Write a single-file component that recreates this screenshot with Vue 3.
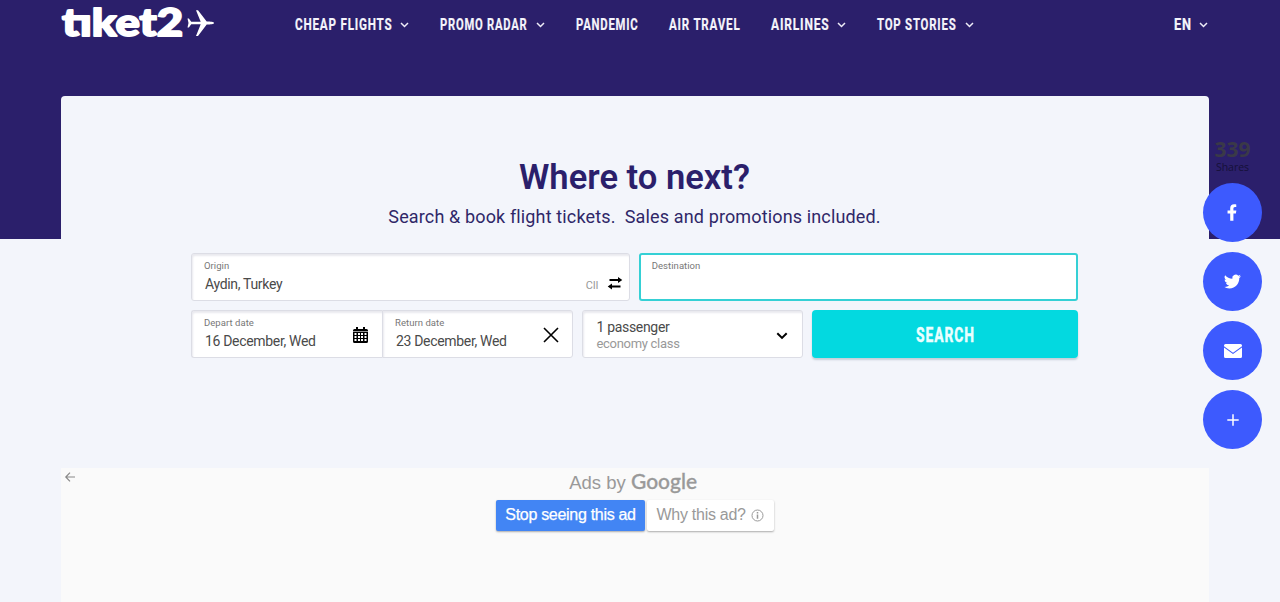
<script setup>
const links = [
  { label: 'CHEAP FLIGHTS', width: 97, menu: true },
  { label: 'PROMO RADAR', width: 87, menu: true },
  { label: 'PANDEMIC', width: 62 },
  { label: 'AIR TRAVEL', width: 71 },
  { label: 'AIRLINES', width: 58, menu: true },
  { label: 'TOP STORIES', width: 79, menu: true },
]
</script>

<template>
  <div class="page">
    <header>
      <a class="logo">
        <svg width="154" height="44" viewBox="0 0 154 44">
          <text class="logo-text" x="1" y="36" textLength="121" lengthAdjust="spacingAndGlyphs">tıket2</text>
          <path d="M126.500 18.500h1.400l2.300 3.200h9.500L135 10.200h2l8.700 11.300c4 0 7.300.4 7.300 1.500s-3.300 1.500-7.300 1.500L137 36h-2l4.700-11.700h-9.500l-2.300 3.200h-1.400l1-4.500z" fill="#fff" />
        </svg>
      </a>
      <nav>
        <a v-for="link in links" :key="link.label">
          <svg class="label" :width="link.width" height="20">
            <text x="0" y="15" :textLength="link.width + .5" lengthAdjust="spacingAndGlyphs">{{ link.label }}</text>
          </svg>
          <svg v-if="link.menu" class="chevron" width="9" height="6" viewBox="0 0 9 6"><path d="M1 1l3.500 3.500L8 1" /></svg>
        </a>
      </nav>
      <a class="lang">
        <svg class="label" width="17" height="20"><text x="0" y="15" textLength="18" lengthAdjust="spacingAndGlyphs">EN</text></svg>
        <svg class="chevron" width="9" height="6" viewBox="0 0 9 6"><path d="M1 1l3.500 3.500L8 1" /></svg>
      </a>
    </header>

    <main>
      <h1>Where to next?</h1>
      <p class="lead">Search &amp; book flight tickets.&nbsp; Sales and promotions included.</p>
      <form>
        <div class="row places">
          <div class="field">
            <small>Origin</small>
            <span>Aydin, Turkey</span>
            <i class="code">CII</i>
            <svg class="swap" width="16" height="14" viewBox="0 0 16 14" fill="none" stroke="#000" stroke-width="1.800">
              <path d="M2.500 4H12M4 10.500h9.500" />
              <path d="M11 1L15.300 4 11 7zM5 7.500L.7 10.500 5 13.500z" fill="#000" stroke="none" />
            </svg>
          </div>
          <div class="field active"><small>Destination</small></div>
        </div>
        <div class="row options">
          <div class="dates">
            <div class="field">
              <small>Depart date</small>
              <span>16 December, Wed</span>
              <svg class="calendar" width="15" height="16" viewBox="0 0 15 16">
                <path d="M3 0h2v2h5V0h2v2h1.500Q15 2 15 3.500v11q0 1.500-1.500 1.500h-12Q0 16 0 14.500v-11Q0 2 1.500 2H3z" />
                <path d="M1.500 6h2v2h-2zM5 6h2v2H5zM8 6h2v2H8zM11.500 6h2v2h-2zM1.500 9h2v2h-2zM5 9h2v2H5zM8 9h2v2H8zM11.500 9h2v2h-2zM1.500 12h2v2h-2zM5 12h2v2H5zM8 12h2v2H8zM11.500 12h2v2h-2z" fill="#fff" />
                <path d="M0 4.500h15" stroke="#999" />
              </svg>
            </div>
            <div class="field">
              <small>Return date</small>
              <span>23 December, Wed</span>
              <svg class="clear" width="16" height="16" viewBox="0 0 16 16"><path d="M1 1l14 14M15 1L1 15" stroke="#000" stroke-width="1.600" /></svg>
            </div>
          </div>
          <div class="field passengers">
            <span>1 passenger</span>
            <em>economy class</em>
            <svg class="arrow" width="12" height="8" viewBox="0 0 12 8"><path d="M1.300 1.200L6 5.900l4.700-4.700" fill="none" stroke="#000" stroke-width="2" /></svg>
          </div>
          <button type="button">
            <svg width="58" height="24"><text x="0" y="19.500" textLength="59" lengthAdjust="spacingAndGlyphs">SEARCH</text></svg>
          </button>
        </div>
      </form>
    </main>

    <section class="ad">
      <svg class="back" width="10" height="10" viewBox="0 0 10 10" fill="none" stroke="#888" stroke-width="1.200"><path d="M10 5H1M5 .7L.8 5 5 9.300" /></svg>
      <div class="ads-by">
        <span>Ads by</span>
        <svg width="67" height="28"><text x="0" y="19" textLength="66" lengthAdjust="spacingAndGlyphs">Google</text></svg>
      </div>
      <div class="ad-buttons">
        <a class="stop">Stop seeing this ad</a>
        <a class="why">
          Why this ad?
          <svg width="13" height="13" viewBox="0 0 13 13" fill="none" stroke="#999"><circle cx="6.500" cy="6.500" r="5.500" /><path d="M6.500 5.500v4.300M6.500 3v1.500" stroke-width="1.500" /></svg>
        </a>
      </div>
    </section>

    <aside>
      <strong>339</strong>
      <span>Shares</span>
      <a>
        <svg width="11" height="17" viewBox="0 0 12 18"><path d="M3.500 18V10H.6V6.700h2.900V4.300C3.500 1.500 5.100 0 7.700 0c1.200 0 2.400.2 2.400.2v2.900H8.700C7.400 3.100 7 3.900 7 4.700v2h3.200L9.700 10H7v8z" /></svg>
      </a>
      <a>
        <svg width="17" height="17" viewBox="0 0 24 24"><path d="M23.950 4.570a10 10 0 01-2.820.775 4.960 4.960 0 002.160-2.723 9.900 9.900 0 01-3.120 1.190 4.920 4.920 0 00-8.384 4.482A13.930 13.930 0 011.640 3.160a4.920 4.920 0 001.520 6.570 4.900 4.900 0 01-2.230-.616v.06a4.920 4.920 0 003.950 4.827 5 5 0 01-2.212.085 4.940 4.940 0 004.600 3.420A9.870 9.870 0 010 19.540a13.940 13.940 0 007.550 2.210c9.050 0 14-7.500 14-13.980 0-.21 0-.42-.015-.63a9.940 9.940 0 002.415-2.570z" /></svg>
      </a>
      <a>
        <svg width="18" height="14" viewBox="0 0 18 14"><path d="M1.500 0h15Q18 0 18 1.500v.8L9 8.800 0 2.300v-.8Q0 0 1.500 0zM0 3.400l9 6.500 9-6.500v9.100q0 1.500-1.500 1.500h-15Q0 14 0 12.500z" /></svg>
      </a>
      <a>
        <svg width="12" height="12" viewBox="0 0 12 12"><path d="M6 .3v11.400M.3 6h11.400" stroke="#fff" stroke-width="1.500" /></svg>
      </a>
    </aside>
  </div>
</template>

<style>
body { background: #f3f5fb; }
</style>

<style scoped>
.page {
  position: relative;
  height: 602px;
  overflow: hidden;
  box-sizing: border-box;
  padding: 0 71px 0 61px;
  font-family: Roboto, "Liberation Sans", sans-serif;
  background: linear-gradient(#2b1f6b 238.500px, #f3f5fb 238.500px);
}
svg { display: block; flex: none; overflow: visible; }

header { display: flex; height: 96px; align-items: flex-start; }
.logo { width: 233.500px; }
.logo-text {
  font: 900 37px Lato, sans-serif;
  fill: #fff; stroke: #fff; stroke-width: 1.800; stroke-linejoin: round;
}
nav { display: flex; gap: 31px; padding-top: 14.500px; }
nav a, .lang { display: flex; align-items: center; gap: 8.500px; }
.label text { font: 700 16px Roboto, sans-serif; letter-spacing: 1.100px; fill: #f5f4fb; stroke: #f5f4fb; stroke-width: .2; }
.chevron path { fill: none; stroke: #eeecf8; stroke-width: 1.500; }
.lang { margin-left: auto; margin-right: 1px; padding-top: 14.500px; }

main {
  height: 372px;
  box-sizing: border-box;
  padding: 60px 131px 0 130px;
  border-radius: 4px 4px 0 0;
  background: #f3f5fb;
  text-align: center;
}
h1 { margin: 0; font-size: 34.600px; line-height: 42px; font-weight: 600; color: #2b1f6b; }
.lead { margin: 7px 0 0; font-size: 18px; line-height: 23px; letter-spacing: .14px; font-weight: 450; color: #2f2768; }
form { display: flex; flex-direction: column; gap: 9px; margin-top: 25px; text-align: left; }
.row { display: grid; gap: 8.500px; height: 48px; }
.places { grid-template-columns: 1fr 1fr; }
.options { grid-template-columns: 382px 221.500px 1fr; }
.dates { display: grid; grid-template-columns: 1fr 1fr; }
.field {
  position: relative;
  display: flex; flex-direction: column;
  box-sizing: border-box;
  padding: 5.500px 12px 0;
  border: 1px solid #dcdde5; border-radius: 3px;
  background: #fff;
  box-shadow: inset 1px 2px 2px #e9e9ef;
  color: #4a4a4a;
}
.dates .field:first-child { border-right: 0; border-radius: 3px 0 0 3px; }
.dates .field:last-child { border-radius: 0 3px 3px 0; }
.field.active { padding: 4.500px 11px 0; border: 2px solid #35d0d5; box-shadow: none; }
.field small { font-size: 9.500px; line-height: 11px; color: #777; letter-spacing: .05px; }
.field span { padding-left: 1px; font-size: 14px; line-height: 17px; letter-spacing: -.32px; margin-top: 5px; }
.code { position: absolute; right: 31px; bottom: 8px; font-size: 11px; line-height: 13px; letter-spacing: -.2px; font-style: normal; color: #999; }
.swap { position: absolute; right: 6px; top: 22px; }
.calendar { position: absolute; right: 14px; top: 16px; }
.clear { position: absolute; right: 13px; top: 16px; }
.passengers { padding: 7.500px 14px 0; }
.field.passengers span { margin: 0; padding: 0; }
.passengers em { font-size: 13px; line-height: 16px; letter-spacing: -.3px; font-style: normal; color: #999; }
.arrow { position: absolute; right: 14px; top: 21px; }
button {
  display: flex; align-items: center; justify-content: center;
  padding: 0; border: 0; border-radius: 4px;
  background: #03d9e0;
  box-shadow: 0 2px 2px #c5cfd8;
}
button text { font: 800 19.500px Roboto, sans-serif; letter-spacing: 1.300px; fill: #e9ffff; stroke: #e9ffff; stroke-width: .3; }

.ad {
  position: relative;
  height: 134px;
  display: flex; flex-direction: column; align-items: center;
  background: #fafafa;
  font-family: "Liberation Sans", Arial, sans-serif;
}
.back { position: absolute; left: 4px; top: 3.500px; }
.ads-by { display: flex; gap: 5px; height: 31.500px; padding-top: 2px; box-sizing: border-box; margin-left: -3px; font-size: 18.500px; line-height: 26px; color: #999; }
.ads-by text { font: 500 20.500px Lato, sans-serif; fill: #999; stroke: #999; stroke-width: .3; }
.ad-buttons { display: flex; gap: 2px; }
.ad-buttons a {
  display: flex; align-items: center; gap: 6px;
  height: 31px; box-sizing: border-box;
  border-radius: 2px; font-size: 16px; letter-spacing: -.3px; white-space: nowrap;
  box-shadow: 0 1px 2px #aaa;
}
.stop { width: 149px; justify-content: center; background: #4285f4; color: #fff; -webkit-text-stroke: .25px #fff; }
.ad-buttons .why { width: 127px; gap: 5px; padding-left: 9.500px; letter-spacing: -.27px; background: #fff; color: #999; }

aside {
  position: absolute; right: 18px; top: 138px;
  width: 59px;
  display: flex; flex-direction: column; align-items: center;
  font-family: "Open Sans", sans-serif; color: #3a3948;
}
aside strong { font-size: 21px; line-height: 22px; font-weight: 700; }
aside span { margin-bottom: 8px; font-size: 10.500px; line-height: 15px; color: #151038; }
aside a {
  display: flex; align-items: center; justify-content: center;
  width: 59px; height: 59px; margin-bottom: 10px;
  border-radius: 50%; background: #3d5afe;
}
aside path { fill: #fff; }
</style>
